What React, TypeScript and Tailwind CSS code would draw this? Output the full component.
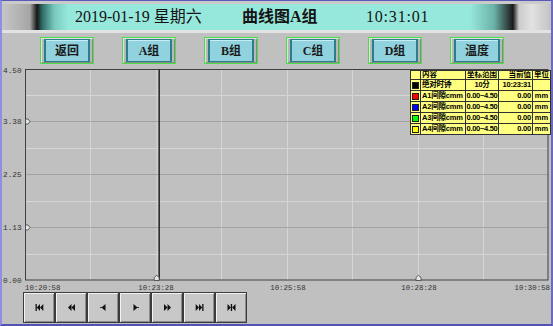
import React from "react";

const groupButtons = ["返回", "A组", "B组", "C组", "D组", "温度"];

const legendRows = [
  { swatch: "bg-[#000000]", name: "绝对时钟", range: "10分", value: "10:23:31", unit: "" },
  { swatch: "bg-[#ff0000]", name: "A1间隙cmm", range: "0.00~4.50", value: "0.00", unit: "mm" },
  { swatch: "bg-[#0000ff]", name: "A2间隙cmm", range: "0.00~4.50", value: "0.00", unit: "mm" },
  { swatch: "bg-[#00ff00]", name: "A3间隙cmm", range: "0.00~4.50", value: "0.00", unit: "mm" },
  { swatch: "bg-[#ffff00]", name: "A4间隙cmm", range: "0.00~4.50", value: "0.00", unit: "mm" },
];

const yLabels = [
  { text: "4.50", y: 72.8 },
  { text: "3.38", y: 124.3 },
  { text: "2.25", y: 177.3 },
  { text: "1.13", y: 230.3 },
  { text: "0.00", y: 282.8 },
];

const xLabels: { text: string; x: number; anchor: "start" | "middle" | "end" }[] = [
  { text: "10:20:58", x: 25, anchor: "start" },
  { text: "10:23:28", x: 156, anchor: "middle" },
  { text: "10:25:58", x: 288, anchor: "middle" },
  { text: "10:28:28", x: 419, anchor: "middle" },
  { text: "10:30:58", x: 550, anchor: "end" },
];

function Chart() {
  const minorY = [95.5, 148.5, 201.5, 254.5];
  const majorY = [121.5, 174.5, 227.5];
  const vert = [90.5, 157, 221.5, 287.5, 352.5, 418.5, 483.5];
  return (
    <svg width={549} height={226} viewBox="2 66 549 226" className="block">
      {minorY.map((y) => (
        <line key={y} x1={25} x2={548} y1={y} y2={y} stroke="#d6d6d6" strokeWidth={1} />
      ))}
      {vert.map((x) => (
        <line key={x} x1={x} x2={x} y1={69} y2={280} stroke="#d6d6d6" strokeWidth={1} />
      ))}
      {majorY.map((y) => (
        <line key={y} x1={25} x2={548} y1={y} y2={y} stroke="#a2a2a2" strokeWidth={1} />
      ))}
      <rect x={25.5} y={69.5} width={522.5} height={210.5} fill="none" stroke="#404040" strokeWidth={1} />
      {/* cursor */}
      <line x1={159.2} x2={159.2} y1={69} y2={280} stroke="#2e2e2e" strokeWidth={1.6} />
      {/* axis markers */}
      {[121.5, 227.5].map((y) => (
        <polygon
          key={y}
          points={`25.5,${y - 2.5} 28,${y - 2.5} 30,${y} 28,${y + 2.5} 25.5,${y + 2.5}`}
          fill="#e6e6e6"
          stroke="#404040"
          strokeWidth={0.8}
        />
      ))}
      {[156.7, 418.5].map((x) => (
        <polygon
          key={x}
          points={`${x - 2.5},280.5 ${x - 2.5},277.5 ${x},275.3 ${x + 2.5},277.5 ${x + 2.5},280.5`}
          fill="#e6e6e6"
          stroke="#404040"
          strokeWidth={0.8}
        />
      ))}
      {yLabels.map((l) => (
        <text key={l.text} x={3} y={l.y} fontFamily="Liberation Mono, monospace" fontSize={7.8} fill="#333333">
          {l.text}
        </text>
      ))}
      {xLabels.map((l) => (
        <text
          key={l.text}
          x={l.x}
          y={289.8}
          textAnchor={l.anchor}
          fontFamily="Liberation Mono, monospace"
          fontSize={7.4}
          fill="#333333"
        >
          {l.text}
        </text>
      ))}
    </svg>
  );
}

function Legend() {
  const cell = "bg-[#ffff80] flex items-center leading-none overflow-hidden";
  return (
    <div className="absolute left-[408px] top-[4px] grid grid-cols-[9px_44px_32px_33px_17px] grid-rows-[8px_repeat(5,10px)] gap-px border border-[#303030] bg-[#303030] font-['Liberation_Sans','Noto_Sans_CJK_SC',sans-serif] text-[7.5px] font-bold text-black">
      <div className={cell} />
      <div className={`${cell} pl-[1px]`}>内容</div>
      <div className={`${cell} justify-center`}>坐标范围</div>
      <div className={`${cell} justify-end pr-[1px]`}>当前值</div>
      <div className={`${cell} justify-center`}>单位</div>
      {legendRows.map((r) => (
        <React.Fragment key={r.name}>
          <div className={`${cell} justify-center`}>
            <div className={`h-[7px] w-[7px] border border-[#202020] ${r.swatch}`} />
          </div>
          <div className={`${cell} whitespace-nowrap pl-[1px] tracking-[-0.2px]`}>{r.name}</div>
          <div className={`${cell} justify-center whitespace-nowrap tracking-[-0.3px]`}>{r.range}</div>
          <div className={`${cell} justify-end whitespace-nowrap pr-[1px] tracking-[-0.2px]`}>{r.value}</div>
          <div className={`${cell} justify-center`}>{r.unit}</div>
        </React.Fragment>
      ))}
    </div>
  );
}

function PlayIcon({ kind }: { kind: number }) {
  const f = "#111111";
  return (
    <svg width={9} height={7} viewBox="0 0 9 7">
      {kind === 0 && (
        <>
          <rect x={0.5} y={0} width={1.3} height={7} fill={f} />
          <polygon points="5,0 1.8,3.5 5,7" fill={f} />
          <polygon points="8.3,0 5,3.5 8.3,7" fill={f} />
        </>
      )}
      {kind === 1 && (
        <>
          <polygon points="4.5,0 1,3.5 4.5,7" fill={f} />
          <polygon points="8,0 4.5,3.5 8,7" fill={f} />
        </>
      )}
      {kind === 2 && (
        <>
          <polygon points="6.5,0 2.5,3.5 6.5,7" fill={f} />
          <rect x={1.2} y={3} width={1.5} height={1} fill={f} />
        </>
      )}
      {kind === 3 && (
        <>
          <polygon points="2.5,0 6.5,3.5 2.5,7" fill={f} />
          <rect x={6.3} y={3} width={1.5} height={1} fill={f} />
        </>
      )}
      {kind === 4 && (
        <>
          <polygon points="1,0 4.5,3.5 1,7" fill={f} />
          <polygon points="4.5,0 8,3.5 4.5,7" fill={f} />
        </>
      )}
      {kind === 5 && (
        <>
          <polygon points="0.7,0 4,3.5 0.7,7" fill={f} />
          <polygon points="4,0 7.2,3.5 4,7" fill={f} />
          <rect x={7.2} y={0} width={1.3} height={7} fill={f} />
        </>
      )}
      {kind === 6 && (
        <>
          <polygon points="0.5,0 3.8,3.5 0.5,7" fill={f} />
          <rect x={3.8} y={0} width={1.3} height={7} fill={f} />
          <polygon points="8.5,0 5.1,3.5 8.5,7" fill={f} />
        </>
      )}
    </svg>
  );
}

export default function App() {
  return (
    <div className="h-[326px] w-[553px] overflow-hidden border-b-2 border-l-2 border-r-2 border-t border-b-[#5252b4] border-l-[#8e8ee4] border-r-[#6a6ac6] border-t-[#5a5ab8] bg-[#c0c0c0] font-['Liberation_Serif','Noto_Sans_CJK_SC',serif]">
      {/* title bar */}
      <div className="h-[32px] bg-[#cacaca] pt-[3px]">
        <div className="flex h-[26px] items-center bg-[linear-gradient(90deg,#c6c6c6_0px,#a6a6a6_28px,#161616_35px,#2c6a64_40px,#78c8bc_52px,#97e8dc_66px,#97e8dc_468px,#6cb2a8_492px,#1a1a1a_511px,#cccccc_517px,#e2e2e2_530px,#c2c2c2_549px)] text-[16px] text-[#141414]">
          <span className="w-[240px] whitespace-nowrap pl-[73px]">2019-01-19 星期六</span>
          <span className="w-[124px] whitespace-nowrap font-bold">曲线图A组</span>
          <span className="whitespace-nowrap tracking-[0.8px]">10:31:01</span>
        </div>
        <div className="h-[3px] bg-[#e2e2e2]" />
      </div>

      {/* group buttons */}
      <div className="flex h-[33px] gap-[28px] pl-[38px] pt-[4px]">
        {groupButtons.map((b) => (
          <div key={b} className="h-[27px] w-[54px] border border-[#48e048] bg-[#b8b8b8] px-[3px] py-px shadow-[inset_1px_1px_0_#e0e0e0,inset_-1px_-1px_0_#8a8a8a]">
            <div className="flex h-full items-center justify-center border-x-2 border-y border-[#2e7c8c] bg-[#90d2de] text-[12px] font-bold leading-none text-[#1a1a1a] shadow-[inset_0_1px_0_#c4eef4]">
              {b}
            </div>
          </div>
        ))}
      </div>

      {/* chart */}
      <div className="relative h-[226px]">
        <Chart />
        <Legend />
      </div>

      {/* playback controls */}
      <div className="flex h-[32px] pl-[21px]">
        {[0, 1, 2, 3, 4, 5, 6].map((k) => (
          <div
            key={k}
            className="flex h-[31px] w-[32px] items-center justify-center border border-[#3c3c3c] bg-[#c8c8c8] shadow-[inset_1px_1px_0_#f2f2f2,inset_-1px_-1px_0_#8c8c8c]"
          >
            <PlayIcon kind={k} />
          </div>
        ))}
      </div>
    </div>
  );
}
